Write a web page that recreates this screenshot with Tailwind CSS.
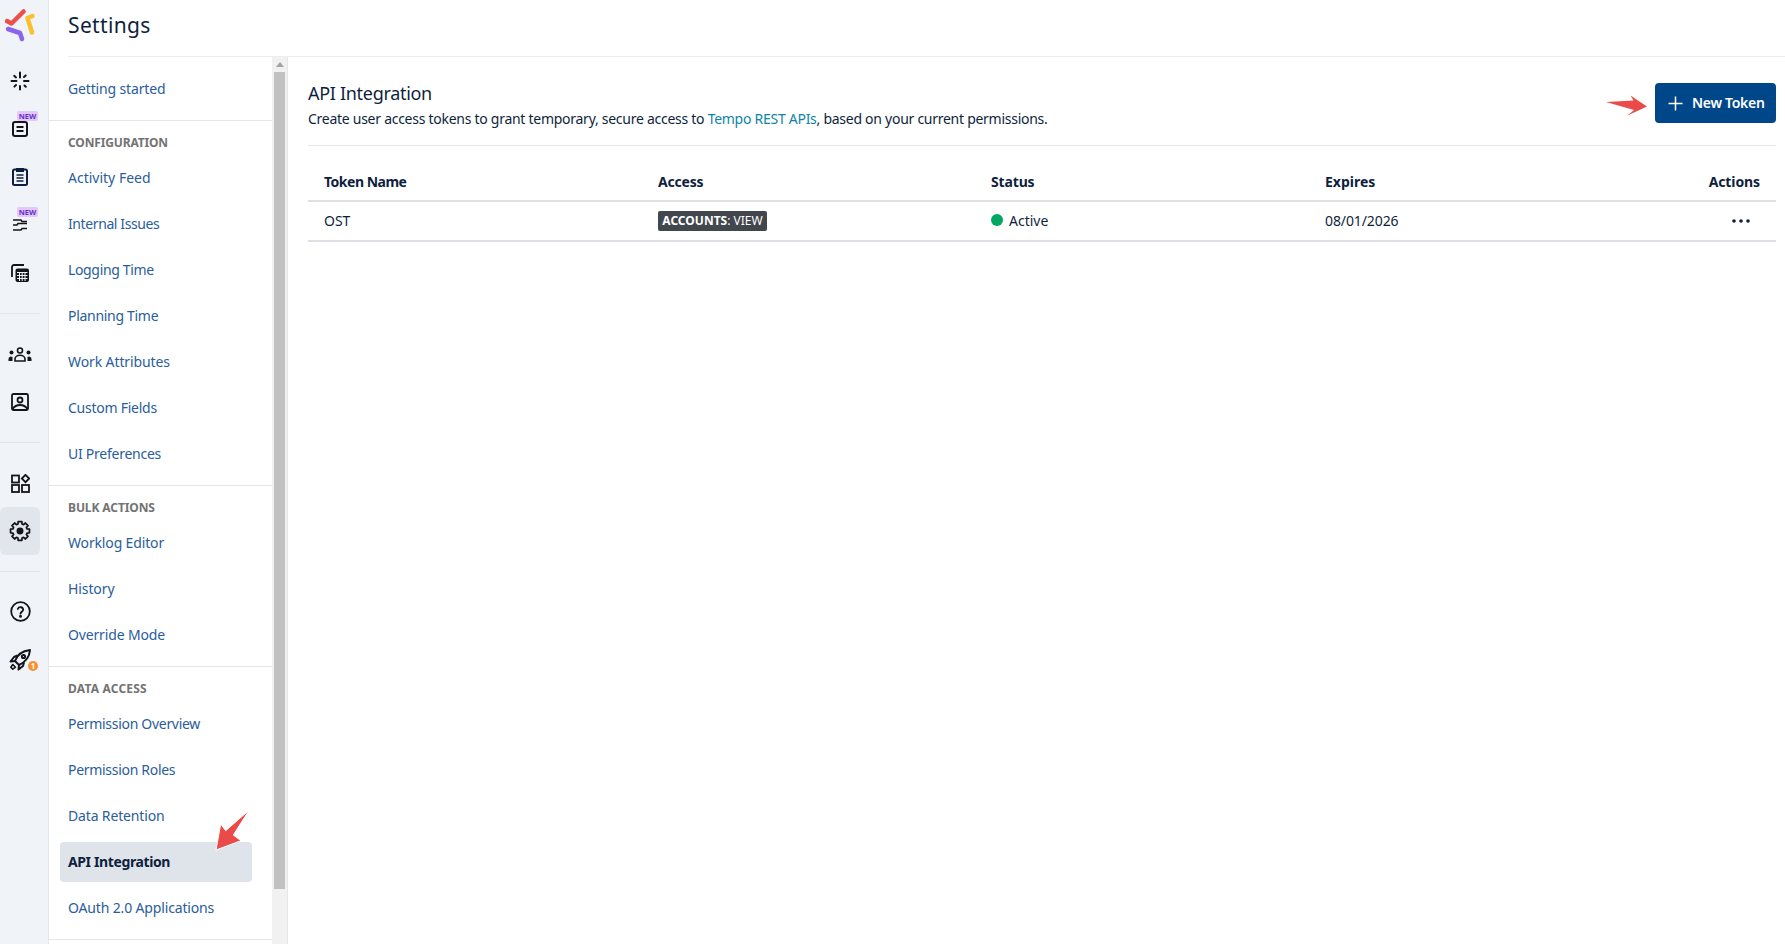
<!DOCTYPE html>
<html lang="en">
<head>
<meta charset="utf-8">
<title>Settings</title>
<script src="https://cdn.jsdelivr.net/npm/@tailwindcss/browser@4"></script>
</head>
<body class="bg-white font-['Noto_Sans',sans-serif] text-[14px] text-[#0e1f3d] overflow-hidden">
<div class="flex h-[944px] w-[1785px]">

  <!-- icon rail -->
  <nav class="w-[49px] shrink-0 bg-[#f0f3f7] border-r border-[#e2e5ea] text-[#14151a]">
    <div class="h-[57px] w-10 flex items-start justify-center pt-[8px]">
      <svg class="ml-[1px]" width="32" height="34" viewBox="0 0 32 34" fill="none" stroke-width="4.5" stroke-linecap="round" stroke-linejoin="round">
        <path d="M2 13l4.500 2.500L18.500 3.500" stroke="#ee4f4b"/>
        <path d="M3 21l12 4 2 6" stroke="#8a63ee"/>
        <path d="M27.500 8l-5 2 4.500 14.500" stroke="#fbc02d"/>
      </svg>
    </div>
    <div class="pb-4 border-b border-[#e2e5ea] w-10">
      <div class="h-12 flex items-center justify-center">
        <svg width="20" height="20" viewBox="0 0 20 20" stroke="#14151a" stroke-width="2" stroke-linecap="round"><path d="M10 1.500v5M10 15v3.500M1.500 10h5M14 10h4.500M4.200 4.800l1.800 1.600M14.500 14.500l1.300 1.300M4.400 15.600L6 14M14 6l1.700-1.600"/></svg>
      </div>
      <div class="h-12 flex items-center justify-center relative">
        <svg width="16" height="16" viewBox="0 0 16 16" fill="none" stroke="#14151a" stroke-width="2"><rect x="1" y="1" width="14" height="14" rx="2"/><path d="M4.500 6h7M4.500 10h7"/></svg>
        <span class="absolute left-[17px] top-[6px] h-[10px] w-[21px] rounded-[2px] bg-[#e3c8fd] text-[#6a2fc4] text-[7.5px] leading-[10px] font-bold text-center">NEW</span>
      </div>
      <div class="h-12 flex items-center justify-center">
        <svg class="mb-[1px]" width="16" height="19" viewBox="0 0 16 19" fill="none" stroke="#0e1f3d" stroke-width="2"><rect x="1" y="2.500" width="14" height="15.500" rx="1.500"/><path d="M5 2h6v2H5z" fill="#0e1f3d"/><path d="M4.500 8h7M4.500 11h7M4.500 14h7" stroke-width="1.500"/></svg>
      </div>
      <div class="h-12 flex items-center justify-center relative">
        <svg width="14" height="14" viewBox="0 0 14 14" fill="none" stroke="#14151a" stroke-width="1.500"><path d="M0 2h8l1 1.500h5M0 7h4l1-1.500h9M0 12h8l1-1.500h5"/></svg>
        <span class="absolute left-[17px] top-[6px] h-[10px] w-[21px] rounded-[2px] bg-[#e3c8fd] text-[#6a2fc4] text-[7.5px] leading-[10px] font-bold text-center">NEW</span>
      </div>
      <div class="h-12 flex items-center justify-center">
        <svg width="19" height="19" viewBox="0 0 19 19" fill="none" stroke="#14151a"><path d="M1 13V3a2 2 0 0 1 2-2h10" stroke-width="1.800"/><rect x="4.500" y="4.500" width="13.500" height="13.500" rx="2" fill="#14151a" stroke="none"/><path d="M6 8.500h10.500M6 11.500h10.500M6 14.500h10.500M8.500 8v9M11.200 8v9M14 8v9" stroke="#f0f3f7" stroke-width="1"/></svg>
      </div>
    </div>
    <div class="pt-4 pb-4 border-b border-[#e2e5ea] w-10">
      <div class="h-12 flex items-center justify-center">
        <svg width="24" height="15" viewBox="0 0 24 15" fill="#14151a"><circle cx="12" cy="3.500" r="2.500" fill="none" stroke="#14151a" stroke-width="1.600"/><circle cx="3.500" cy="5.500" r="2"/><circle cx="20.500" cy="5.500" r="2"/><path d="M0.500 14v-2a2.500 2.500 0 0 1 4-2V14zM23.500 14v-2a2.500 2.500 0 0 0-4-2V14z"/><path d="M7 14v-2a4 3 0 0 1 10 0v2z" fill="none" stroke="#14151a" stroke-width="1.600"/></svg>
      </div>
      <div class="h-12 flex items-center justify-center">
        <svg width="18" height="18" viewBox="0 0 18 18" fill="none" stroke="#14151a" stroke-width="1.800"><rect x="1" y="1" width="16" height="16" rx="1.500"/><circle cx="9" cy="7" r="2.500"/><path d="M1.500 16c2-3 4.500-4 7.500-4s5.500 1 7.500 4"/></svg>
      </div>
    </div>
    <div class="pt-4 pb-4 border-b border-[#e2e5ea] w-10">
      <div class="h-12 flex items-center justify-center">
        <svg width="19" height="19" viewBox="0 0 19 19" fill="none" stroke="#14151a" stroke-width="1.800"><rect x="1" y="1.500" width="7" height="7"/><rect x="1" y="11" width="7" height="7"/><rect x="11" y="11" width="7" height="7"/><path d="M14.500 0.800l3.700 3.700-3.700 3.700-3.700-3.700z"/></svg>
      </div>
      <div class="h-12 flex items-center justify-center rounded-[6px] bg-[#e1e5ec]">
        <svg width="22" height="22" viewBox="0 0 24 24" fill="none" stroke="#14151a" stroke-width="1.900" stroke-linejoin="round"><path d="M9.800 4.310L10 1.690H14L14.200 4.310L15.880 5.010L17.880 3.300L20.700 6.120L18.990 8.120L19.690 9.800L22.310 10V14L19.690 14.200L18.990 15.880L20.700 17.880L17.880 20.700L15.880 18.990L14.200 19.690L14 22.310H10L9.800 19.690L8.120 18.990L6.120 20.700L3.300 17.880L5.010 15.880L4.310 14.200L1.690 14V10L4.310 9.800L5.010 8.120L3.300 6.120L6.120 3.300L8.120 5.010Z"/><circle cx="12" cy="12" r="3.800" fill="#14151a" stroke="none"/></svg>
      </div>
    </div>
    <div class="pt-4 w-10">
      <div class="h-12 flex items-center justify-center">
        <svg class="mb-[2px]" width="21" height="21" viewBox="0 0 21 21" fill="none" stroke="#14151a" stroke-width="1.800" stroke-linecap="round"><circle cx="10.500" cy="10.500" r="9.300"/><path d="M7.800 8a2.800 2.800 0 0 1 5.400.8c0 1.800-2.700 2.200-2.700 3.900"/><circle cx="10.500" cy="15.300" r="0.600" fill="#14151a"/></svg>
      </div>
      <div class="h-12 flex items-center justify-center relative">
        <svg width="22" height="22" viewBox="0 0 22 22" fill="none" stroke="#14151a" stroke-width="2" stroke-linejoin="round"><path d="M6 12C8 6 13 2 21 1 20.500 8 16.500 13 10 16z"/><circle cx="14.500" cy="7.500" r="1.600"/><path d="M6 12l-4.500.5L5 8l3.500-1.500M10 16l-.5 4.500L14 17l1-3.500"/><path d="M3.800 15.500l2.700 2.700-2.700 2-2-2z" fill="#f0f3f7" stroke-width="1.600"/></svg>
        <span class="absolute left-[28px] top-[25px] h-[10px] w-[10px] rounded-full bg-[#f79232] text-white text-[8px] leading-[10px] font-bold text-center">1</span>
      </div>
    </div>
  </nav>

  <div class="flex-1 min-w-0 flex flex-col">
    <header class="h-[57px] ml-[19px] border-b border-[#eceef1] flex items-center pb-[5px]">
      <h1 class="text-[21px] tracking-[0.35px] font-normal text-[#0e1f3d]">Settings</h1>
    </header>

    <div class="flex-1 min-h-0 flex">
      <!-- settings menu -->
      <aside class="w-[239px] shrink-0 flex border-r border-[#e4e6ea]">
        <div class="w-[223px] shrink-0 overflow-hidden text-[#2a5d9c]">
          <div class="pt-3 pb-[5px] border-b border-[#e4e6ea]">
            <a class="h-10 mb-1.5 ml-[11px] mr-5 px-2 pb-[2px] rounded-[4px] flex items-center tracking-[-0.15px]">Getting started</a>
          </div>
          <div class="pt-[14px] pb-[5px] border-b border-[#e4e6ea]">
            <div class="h-4 mb-[7px] px-[19px] text-[12px] leading-4 font-bold text-[#737373] tracking-[-0.15px]">CONFIGURATION</div>
            <a class="h-10 mb-1.5 ml-[11px] mr-5 px-2 pb-[2px] rounded-[4px] flex items-center">Activity Feed</a>
            <a class="h-10 mb-1.5 ml-[11px] mr-5 px-2 pb-[2px] rounded-[4px] flex items-center tracking-[-0.4px]">Internal Issues</a>
            <a class="h-10 mb-1.5 ml-[11px] mr-5 px-2 pb-[2px] rounded-[4px] flex items-center tracking-[-0.35px]">Logging Time</a>
            <a class="h-10 mb-1.5 ml-[11px] mr-5 px-2 pb-[2px] rounded-[4px] flex items-center tracking-[-0.3px]">Planning Time</a>
            <a class="h-10 mb-1.5 ml-[11px] mr-5 px-2 pb-[2px] rounded-[4px] flex items-center tracking-[-0.1px]">Work Attributes</a>
            <a class="h-10 mb-1.5 ml-[11px] mr-5 px-2 pb-[2px] rounded-[4px] flex items-center tracking-[-0.25px]">Custom Fields</a>
            <a class="h-10 mb-1.5 ml-[11px] mr-5 px-2 pb-[2px] rounded-[4px] flex items-center tracking-[-0.25px]">UI Preferences</a>
          </div>
          <div class="pt-[14px] pb-[5px] border-b border-[#e4e6ea]">
            <div class="h-4 mb-[7px] px-[19px] text-[12px] leading-4 font-bold text-[#737373] tracking-[-0.1px]">BULK ACTIONS</div>
            <a class="h-10 mb-1.5 ml-[11px] mr-5 px-2 pb-[2px] rounded-[4px] flex items-center tracking-[-0.15px]">Worklog Editor</a>
            <a class="h-10 mb-1.5 ml-[11px] mr-5 px-2 pb-[2px] rounded-[4px] flex items-center tracking-[-0.1px]">History</a>
            <a class="h-10 mb-1.5 ml-[11px] mr-5 px-2 pb-[2px] rounded-[4px] flex items-center tracking-[-0.15px]">Override Mode</a>
          </div>
          <div class="pt-[14px] pb-[5px] border-b border-[#e4e6ea]">
            <div class="h-4 mb-[7px] px-[19px] text-[12px] leading-4 font-bold text-[#737373] tracking-[0.2px]">DATA ACCESS</div>
            <a class="h-10 mb-1.5 ml-[11px] mr-5 px-2 pb-[2px] rounded-[4px] flex items-center tracking-[-0.3px]">Permission Overview</a>
            <a class="h-10 mb-1.5 ml-[11px] mr-5 px-2 pb-[2px] rounded-[4px] flex items-center tracking-[-0.3px]">Permission Roles</a>
            <a class="h-10 mb-1.5 ml-[11px] mr-5 px-2 pb-[2px] rounded-[4px] flex items-center tracking-[-0.15px]">Data Retention</a>
            <a class="h-10 mb-1.5 ml-[11px] mr-5 px-2 pb-[2px] rounded-[4px] flex items-center bg-[#dfe3ea] font-bold text-[#0e1f3d] tracking-[-0.38px]">API Integration</a>
            <a class="h-10 mb-1.5 ml-[11px] mr-5 px-2 pb-[2px] rounded-[4px] flex items-center tracking-[-0.15px]">OAuth 2.0 Applications</a>
          </div>
        </div>
        <!-- scrollbar -->
        <div class="w-[15px] shrink-0 bg-[#f1f1f1] pl-[2px] pr-[2px]">
          <div class="h-[15px] flex items-center justify-center">
            <div class="w-0 h-0 border-x-[4px] border-x-transparent border-b-[5px] border-b-[#a3a3a3]"></div>
          </div>
          <div class="h-[817px] bg-[#c1c1c1]"></div>
        </div>
      </aside>

      <!-- page content -->
      <main class="flex-1 min-w-0 pl-5 pr-[9px]">
        <div class="flex justify-between items-start pt-6 pb-4 border-b border-[#e4e6ea]">
          <div>
            <h2 class="text-[18px] leading-6 font-normal text-[#0e1f3d] tracking-[-0.3px]">API Integration</h2>
            <p class="mt-1 leading-5 tracking-[-0.27px]">Create user access tokens to grant temporary, secure access to <a class="text-[#0e84a8]">Tempo REST APIs</a>, based on your current permissions.</p>
          </div>
          <div class="relative mt-[2px]">
            <svg class="absolute left-[-49px] top-[12px]" width="42" height="22" viewBox="0 0 42 22"><path d="M0 7l27.500-1.500L24.500 0.500 41 11.500 21.500 20.500l6.500-5.500z" fill="#ea4b49"/></svg>
            <button class="h-10 w-[121px] rounded-[4px] bg-[#00478a] text-white font-semibold flex items-center pl-[13px] pb-[2px] tracking-[-0.3px]">
              <svg class="mr-[9px] mt-[2px]" width="15" height="15" viewBox="0 0 15 15" fill="none" stroke="white" stroke-width="1.500"><path d="M7.500 0.500v14M0.500 7.500h14"/></svg>
              New Token
            </button>
          </div>
        </div>

        <div class="grid grid-cols-[334px_333px_334px_1fr_auto] items-center px-4 pt-4 h-[56px] border-b-2 border-[#dfdfe6] font-bold">
          <div class="tracking-[-0.5px]">Token Name</div>
          <div class="tracking-[-0.2px]">Access</div>
          <div class="tracking-[-0.15px]">Status</div>
          <div>Expires</div>
          <div class="text-right tracking-[-0.1px]">Actions</div>
        </div>
        <div class="grid grid-cols-[334px_333px_334px_1fr_auto] items-center px-4 pb-[2px] h-10 border-b-2 border-[#dfdfe6]">
          <div>OST</div>
          <div class="flex">
            <span class="mt-[2px] h-5 w-[109px] rounded-[2px] bg-[#42464d] text-white text-[12px] leading-5 text-center"><b>ACCOUNTS</b>: VIEW</span>
          </div>
          <div class="flex items-center gap-[6px]">
            <span class="w-3 h-3 rounded-full bg-[#00a862]"></span>
            Active
          </div>
          <div class="tracking-[-0.1px]">08/01/2026</div>
          <div class="flex justify-end pr-[10px] pt-[2px]">
            <svg width="18" height="4" viewBox="0 0 18 4" fill="#0e1f3d"><circle cx="2" cy="2" r="1.800"/><circle cx="9" cy="2" r="1.800"/><circle cx="16" cy="2" r="1.800"/></svg>
          </div>
        </div>
      </main>
    </div>
  </div>
</div>

<!-- annotation arrow over the menu -->
<svg class="absolute left-[214px] top-[808px]" width="38" height="45" viewBox="0 0 38 45"><path d="M35.300 2L11.700 22.700 6.700 16 2 42 27 32.700 19.300 27z" fill="#ea4b49" stroke="white" stroke-width="1"/></svg>
</body>
</html>
